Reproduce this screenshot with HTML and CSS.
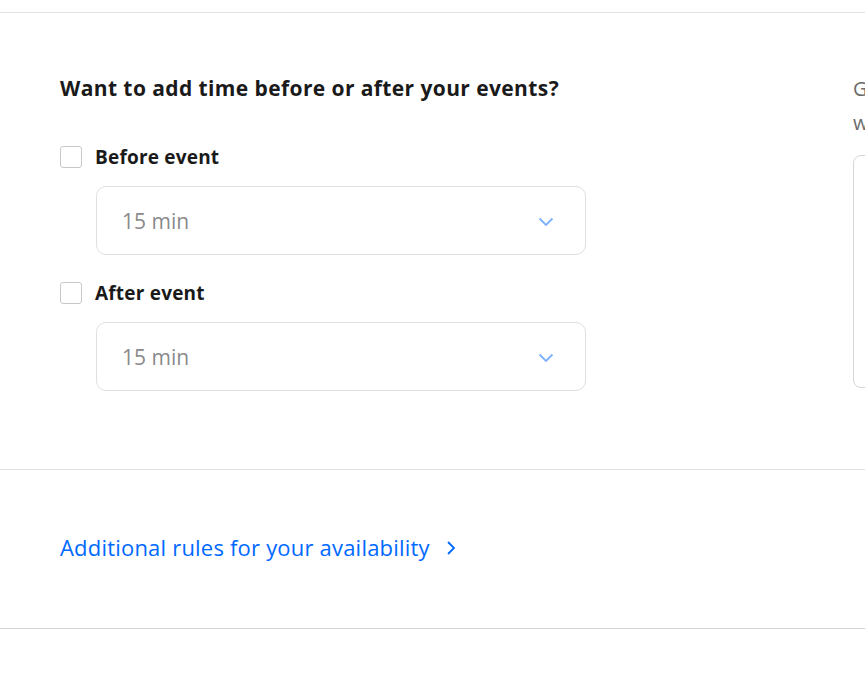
FILE: index.html
```html
<!DOCTYPE html>
<html>
<head>
<meta charset="utf-8">
<link rel="stylesheet" href="styles.css">
</head>
<body>
<div class="page">
  <section class="buffers">
    <div class="left">
      <h2 class="title">Want to add time before or after your events?</h2>
      <div class="option">
        <label class="check-row"><span class="box"></span><span class="label">Before event</span></label>
        <div class="select"><span class="value">15 min</span>
          <svg class="chev" width="16" height="10" viewBox="0 0 16 10"><path d="M1.5 1.5 L8 8 L14.5 1.5" fill="none" stroke="#7fb0fb" stroke-width="1.8"/></svg>
        </div>
      </div>
      <div class="option">
        <label class="check-row"><span class="box"></span><span class="label">After event</span></label>
        <div class="select"><span class="value">15 min</span>
          <svg class="chev" width="16" height="10" viewBox="0 0 16 10"><path d="M1.5 1.5 L8 8 L14.5 1.5" fill="none" stroke="#7fb0fb" stroke-width="1.8"/></svg>
        </div>
      </div>
    </div>
    <div class="right">
      <p class="side-text">Give your invitees</p>
      <p class="side-text">when you're free</p>
      <div class="side-box"></div>
    </div>
  </section>
  <section class="rules">
    <a class="rules-link" href="#">Additional rules for your availability
      <svg class="arrow" width="10" height="16" viewBox="0 0 10 16"><path d="M2 2 L8 8 L2 14" fill="none" stroke="#0069ff" stroke-width="1.8"/></svg>
    </a>
  </section>
</div>
</body>
</html>
```
FILE: styles.css
```css
html, body { margin: 0; padding: 0; background: #fff; }
body { font-family: "Open Sans", "Noto Sans", sans-serif; color: #1a1a1a; overflow: hidden; }
.page { padding-top: 12px; width: 866px; }
.buffers {
  border-top: 1px solid #e2e2e2;
  border-bottom: 1px solid #e2e2e2;
  display: flex;
  padding: 62px 0 0 60px;
  height: 394px;
  margin-right: 1px;
  overflow: hidden;
}
.left { width: 526px; flex: none; }
.title { font-size: 21px; font-weight: 700; line-height: 26px; margin: 0 0 45px; letter-spacing: 0.4px; }
.option { margin-bottom: 27px; }
.check-row { display: flex; align-items: center; gap: 13px; }
.box { width: 20px; height: 20px; border: 1px solid #c8c8c8; border-radius: 3px; background: #fff; }
.label { font-size: 19px; font-weight: 700; line-height: 22px; letter-spacing: 0.2px; }
.select {
  margin: 18px 0 0 36px;
  height: 67px;
  border: 1px solid #e0e0e0;
  border-radius: 10px;
  display: flex; align-items: center; justify-content: space-between;
  padding: 0 31px 0 25px;
}
.value { font-size: 21px; color: #8a8a8a; }
.chev { margin-top: 3px; }
.right { margin-left: 267px; flex: none; width: 60px; padding-top: 0; margin-top: -3px; overflow: hidden; }
.side-text { margin: 0; font-size: 20px; color: #6b6b6b; line-height: 34px; white-space: nowrap; }
.side-box { margin-top: 15px; height: 231px; width: 60px; border: 1px solid #d6d6d6; border-radius: 8px; }
.rules {
  border-bottom: 1px solid #d4d4d4;
  height: 158px;
  padding-left: 60px;
  display: flex; align-items: center;
  margin-right: 1px;
}
.rules-link { color: #0069ff; text-decoration: none; font-size: 22px; letter-spacing: 0.2px; display: flex; align-items: center; gap: 16px; margin-top: -4px; }
.arrow { margin-top: 1px; }
```
